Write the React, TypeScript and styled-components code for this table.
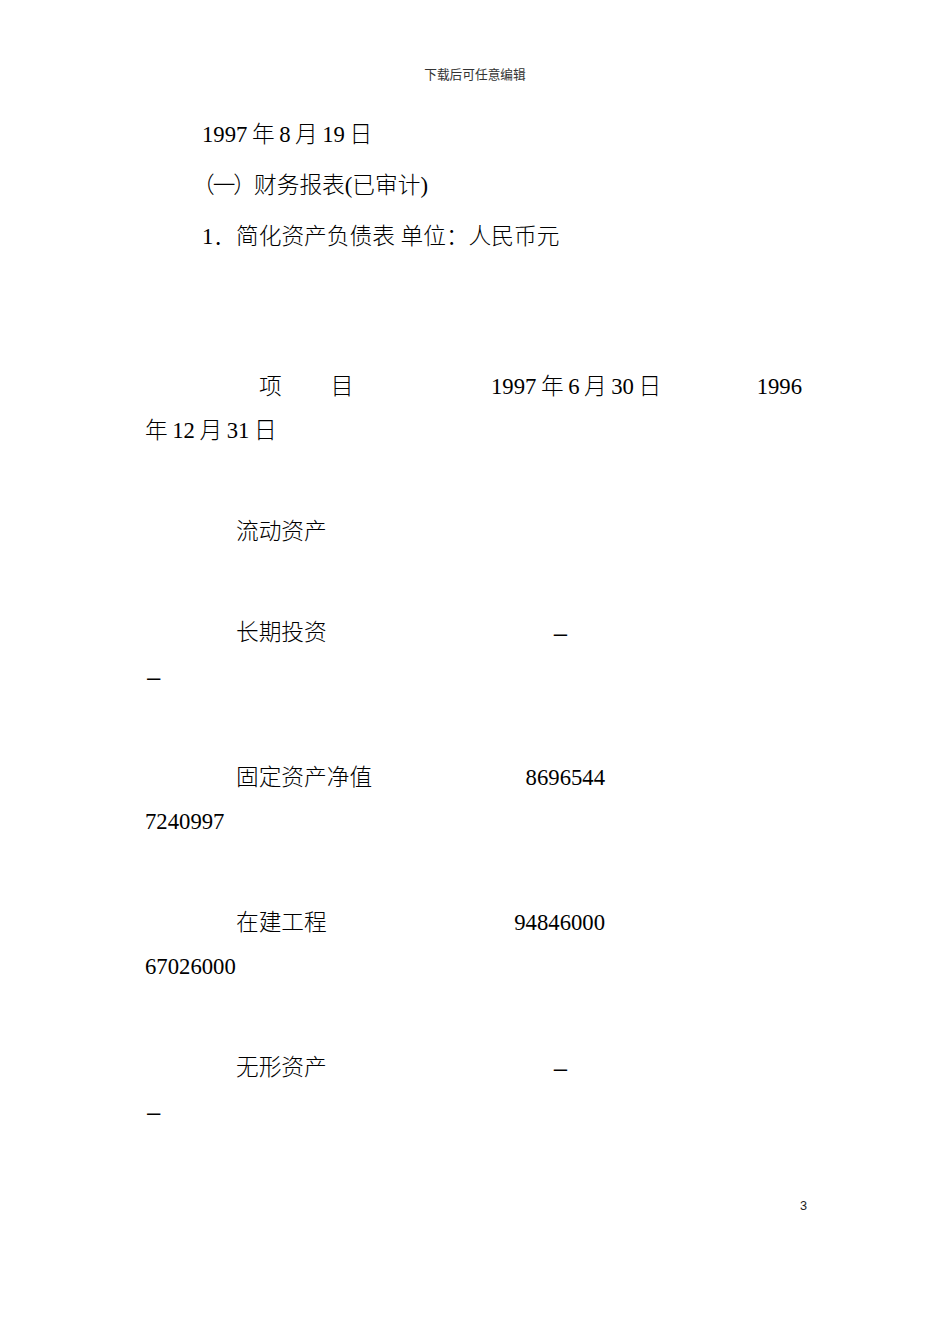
import React from 'react';
import styled, { createGlobalStyle } from 'styled-components';

const GlobalStyle = createGlobalStyle`
  html, body {
    margin: 0;
    padding: 0;
    background: #ffffff;
  }
`;

// Word puts a little air between Latin digits and CJK characters
const mix = (s: string) =>
  s.replace(/(\d)(?=[\u4e00-\u9fff])|([\u4e00-\u9fff])(?=\d)/g, '$1$2\u2009');

const Page = styled.div`
  width: 950px;
  min-height: 1344px;
  box-sizing: border-box;
  padding: 65px 145px 0 145px;
  font-family: "Liberation Serif", "Noto Sans CJK SC", serif;
  font-size: 22.7px;
  font-weight: 300;
  color: #000;
`;

const RunningHead = styled.div`
  height: 20px;
  line-height: 20px;
  text-align: center;
  font-size: 12.7px;
  font-weight: 400;
  color: #333;
  margin-bottom: 23.5px;
`;

const Para = styled.p`
  margin: 0;
  line-height: 51px;
  text-indent: 57px;
  white-space: pre;
`;

// the source sets the full-width brackets a bit tighter and further left
const Tight = styled.span`
  margin-left: -10px;
  letter-spacing: -2px;
`;

const Table = styled.div`
  margin-top: 103.5px;
  display: flex;
  flex-direction: column;
  gap: 57px;
`;

const Row = styled.div`
  display: flex;
  flex-direction: column;
`;

const Line = styled.div`
  display: flex;
  height: 44px;
  line-height: 44px;
  white-space: pre;
`;

const Label = styled.span<{ $width: number; $indent: number; $spread?: number }>`
  flex: 0 0 ${({ $width }) => $width}px;
  box-sizing: border-box;
  padding-left: ${({ $indent }) => $indent}px;
  letter-spacing: ${({ $spread }) => $spread ?? 0}px;
`;

const Value = styled.span<{ $pad?: number }>`
  flex: 0 0 120px;
  box-sizing: border-box;
  text-align: right;
  padding-right: ${({ $pad }) => $pad ?? 0}px;
`;

const EndValue = styled.span`
  margin-left: auto;
  margin-right: 3px;
`;

const Wrap = styled.div<{ $pad?: number }>`
  height: 44px;
  line-height: 44px;
  padding-left: ${({ $pad }) => $pad ?? 0}px;
`;

const Dash = styled.span`
  font-family: "Liberation Sans", sans-serif;
  font-size: 24px;
  font-weight: 400;
`;

const PageNumber = styled.div`
  margin-top: 62px;
  height: 20px;
  line-height: 20px;
  text-align: right;
  font-family: "Liberation Sans", sans-serif;
  font-size: 12.7px;
  font-weight: 400;
  color: #222;
  margin-right: -2px;
`;

interface Item {
  label: string;
  current?: string;
  previous?: string;
}

const DASH = '\u2013';

const items: Item[] = [
  { label: '流动资产' },
  { label: '长期投资', current: DASH, previous: DASH },
  { label: '固定资产净值', current: '8696544', previous: '7240997' },
  { label: '在建工程', current: '94846000', previous: '67026000' },
  { label: '无形资产', current: DASH, previous: DASH },
];

const cell = (v: string) => (v === DASH ? <Dash>{v}</Dash> : v);

const App: React.FC = () => (
  <>
    <GlobalStyle />
    <Page>
      <RunningHead>下载后可任意编辑</RunningHead>
      <Para>{mix('1997年8月19日')}</Para>
      <Para><Tight>（一）</Tight>财务报表(已审计)</Para>
      <Para>1．简化资产负债表 单位：人民币元</Para>

      <Table>
        <Row>
          <Line>
            <Label $width={346} $indent={114} $spread={49}>项目</Label>
            <span>{mix('1997年6月30日')}</span>
            <EndValue>1996</EndValue>
          </Line>
          <Wrap>{mix('年12月31日')}</Wrap>
        </Row>

        {items.map((item, i) => (
          <Row key={i}>
            <Line>
              <Label $width={340} $indent={91}>{item.label}</Label>
              {item.current && (
                <Value $pad={item.current === DASH ? 38 : 0}>{cell(item.current)}</Value>
              )}
            </Line>
            {item.previous && (
              <Wrap $pad={item.previous === DASH ? 2 : 0}>{cell(item.previous)}</Wrap>
            )}
          </Row>
        ))}
      </Table>

      <PageNumber>3</PageNumber>
    </Page>
  </>
);

export default App;
